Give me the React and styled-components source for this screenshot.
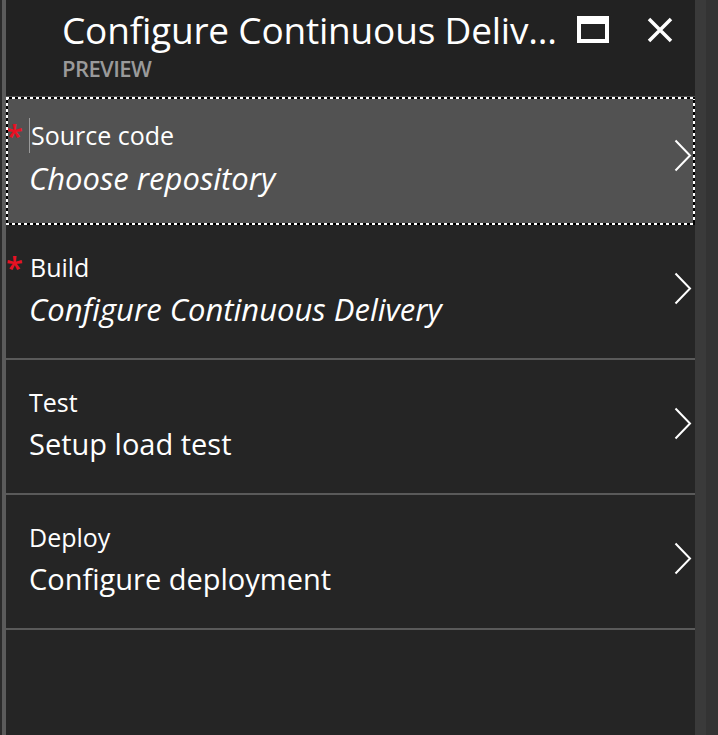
import React from "react";
import styled, { createGlobalStyle } from "styled-components";

const GlobalStyle = createGlobalStyle`
  html, body {
    margin: 0;
    padding: 0;
    background: #2b2b2b;
  }
  * { box-sizing: border-box; }
`;

const Frame = styled.div`
  width: 718px;
  height: 735px;
  display: flex;
  padding-left: 2px;
  background: #2b2b2b;
  font-family: "Open Sans", "Noto Sans", sans-serif;
  color: #fff;
  overflow: hidden;
`;

const Blade = styled.div`
  width: 693px;
  flex: none;
  border-left: 4px solid #5b5b5b;
  background: #252525;
  display: flex;
  flex-direction: column;
`;

const Rail = styled.div`
  flex: 1;
  background: #333333;
  border-left: 11px solid #3a3a3a;
`;

const Header = styled.div`
  height: 96px;
  flex: none;
  background: #222222;
  display: flex;
  align-items: flex-start;
  padding: 5px 22px 0 56px;
`;

const TitleBlock = styled.div`
  flex: 1;
  display: flex;
  flex-direction: column;
`;

const Title = styled.h1`
  margin: 0;
  font-size: 37px;
  font-weight: 400;
  line-height: 50px;
  white-space: nowrap;
  letter-spacing: -0.2px;
`;

const Subtitle = styled.div`
  font-size: 22px;
  font-weight: 600;
  color: #9a9a9a;
  line-height: 26px;
  letter-spacing: -0.6px;
`;

const Controls = styled.div`
  display: flex;
  align-items: center;
  gap: 38px;
  padding-top: 11px;
`;

const IconButton = styled.button`
  background: none;
  border: 0;
  padding: 0;
  display: flex;
  color: #fff;
  cursor: pointer;
`;

const List = styled.div`
  display: flex;
  flex-direction: column;
`;

const Row = styled.div`
  position: relative;
  height: ${(p) => (p.$selected ? 129 : 135)}px;
  border-bottom: 2px solid ${(p) => (p.$selected ? "transparent" : "#5a5a5a")};
  background: ${(p) => (p.$selected ? "#525252" : "transparent")};
  display: flex;
  align-items: center;
  padding: 0 3px 4px 23px;

  &::after {
    content: ${(p) => (p.$selected ? '""' : "none")};
    position: absolute;
    left: 0;
    right: 0;
    top: 1px;
    bottom: -2px;
    pointer-events: none;
    background:
      repeating-linear-gradient(90deg, #fff 0 3px, #000 3px 6px) top / 100% 2px no-repeat,
      repeating-linear-gradient(90deg, #fff 0 3px, #000 3px 6px) bottom / 100% 2px no-repeat,
      repeating-linear-gradient(180deg, #fff 0 3px, #000 3px 6px) left / 2px 100% no-repeat,
      repeating-linear-gradient(180deg, #fff 0 3px, #000 3px 6px) right / 2px 100% no-repeat;
  }
`;

const Star = styled.span`
  position: absolute;
  left: 0px;
  top: ${(p) => p.$top}px;
  color: #e81123;
  font-size: 31px;
  line-height: 1;
  font-weight: 600;
`;

const Texts = styled.div`
  flex: 1;
  display: flex;
  flex-direction: column;
`;

const Label = styled.div`
  font-size: 25px;
  line-height: 34px;
  display: flex;
  align-items: center;
  padding-left: ${(p) => (p.$indent ? 1 : 0)}px;
`;

const Caret = styled.span`
  width: 1px;
  height: 35px;
  background: #9a9a9a;
  margin-right: 1px;
`;

const Value = styled.div`
  font-size: ${(p) => (p.$empty ? 31 : 29)}px;
  line-height: 40px;
  font-style: ${(p) => (p.$empty ? "italic" : "normal")};
  margin-top: 5px;
`;

const ChevronBox = styled.div`
  display: flex;
  margin-top: ${(p) => (p.$selected ? -4 : -2)}px;
`;

const Chevron = () => (
  <svg width="18" height="33" viewBox="0 0 18 33" fill="none">
    <path d="M1.5 1.5 L16 16.5 L1.5 31.5" stroke="#fff" strokeWidth="2" />
  </svg>
);

const MaximizeIcon = () => (
  <svg width="32" height="27" viewBox="0 0 32 27">
    <path fillRule="evenodd" fill="#fff" d="M0 0H32V27H0Z M4 8V23H28V8Z" />
  </svg>
);

const CloseIcon = () => (
  <svg width="26" height="26" viewBox="0 0 26 26">
    <path d="M2 2 L24 24 M24 2 L2 24" stroke="#fff" strokeWidth="3.5" />
  </svg>
);

const steps = [
  { label: "Source code", value: "Choose repository", required: true, empty: true, selected: true },
  { label: "Build", value: "Configure Continuous Delivery", required: true, empty: true },
  { label: "Test", value: "Setup load test" },
  { label: "Deploy", value: "Configure deployment" },
];

export default function App() {
  return (
    <>
      <GlobalStyle />
      <Frame>
        <Blade>
          <Header>
            <TitleBlock>
              <Title>Configure Continuous Deliv...</Title>
              <Subtitle>PREVIEW</Subtitle>
            </TitleBlock>
            <Controls>
              <IconButton aria-label="Maximize"><MaximizeIcon /></IconButton>
              <IconButton aria-label="Close"><CloseIcon /></IconButton>
            </Controls>
          </Header>
          <List>
            {steps.map((s) => (
              <Row key={s.label} $selected={s.selected}>
                {s.required && <Star $top={s.selected ? 24 : 27}>*</Star>}
                <Texts>
                  <Label $indent={s.required && !s.selected}>
                    {s.selected && <Caret />}
                    {s.label}
                  </Label>
                  <Value $empty={s.empty}>{s.value}</Value>
                </Texts>
                <ChevronBox $selected={s.selected}>
                  <Chevron />
                </ChevronBox>
              </Row>
            ))}
          </List>
        </Blade>
        <Rail />
      </Frame>
    </>
  );
}
